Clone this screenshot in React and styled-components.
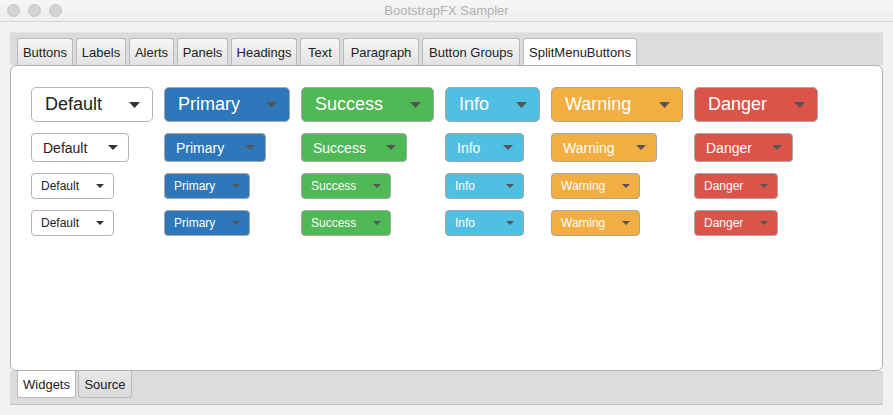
import React from "react";
import styled, { createGlobalStyle } from "styled-components";

const Global = createGlobalStyle`
  html, body {
    margin: 0;
    padding: 0;
    background: #f2f2f2;
    font-family: "Liberation Sans", Arial, sans-serif;
  }
`;

const Window = styled.div`
  width: 893px;
  height: 415px;
  background: #f2f2f2;
  display: flex;
  flex-direction: column;
  overflow: hidden;
`;

const TitleBar = styled.div`
  height: 21px;
  border-bottom: 1px solid #d6d6d6;
  background: linear-gradient(to bottom, #f6f6f6, #ededed);
  display: flex;
  align-items: center;
  position: relative;
  padding-left: 7px;
  gap: 8px;
`;

const Light = styled.span`
  width: 11px;
  height: 11px;
  border-radius: 50%;
  background: #d3d3d3;
  border: 1px solid #c6c6c6;
`;

const Title = styled.div`
  position: absolute;
  left: 0;
  right: 0;
  top: 0;
  line-height: 22px;
  text-align: center;
  font-size: 13px;
  color: #b2b2b2;
  pointer-events: none;
`;

const Body = styled.div`
  margin: 10px 10px 0 10px;
  display: flex;
  flex-direction: column;
`;

const Header = styled.div`
  height: 33px;
  background: #dcdcdc;
  border-top: 1px solid #e4e4e4;
  box-sizing: border-box;
  display: flex;
  align-items: flex-end;
  gap: 3px;
  padding-left: 7px;
`;

const Tab = styled.div`
  width: ${p => p.$w}px;
  height: 27px;
  box-sizing: border-box;
  display: flex;
  align-items: center;
  justify-content: center;
  font-size: 13px;
  color: #222;
  white-space: nowrap;
  border: 1px solid #b9b9b9;
  border-bottom: none;
  border-radius: 3px 3px 0 0;
  background: ${p => (p.$active ? "#ffffff" : "linear-gradient(to bottom, #f7f7f7, #e2e2e2)")};
`;

const Content = styled.div`
  height: 306px;
  box-sizing: border-box;
  background: #fff;
  border: 1px solid #b0b0b0;
  border-radius: 6px;
  padding: 21px 20px;
`;

const Grid = styled.div`
  display: grid;
  grid-template-columns: repeat(6, auto);
  justify-content: start;
  justify-items: start;
  column-gap: 11px;
  row-gap: 11px;
`;

const BottomBar = styled.div`
  height: 34px;
  box-sizing: border-box;
  background: #dcdcdc;
  border-bottom: 1px solid #c2c2c2;
  display: flex;
  align-items: flex-start;
  gap: 2px;
  padding-left: 7px;
`;

const BottomTab = styled.div`
  width: ${p => p.$w}px;
  height: 27px;
  box-sizing: border-box;
  display: flex;
  align-items: center;
  justify-content: center;
  font-size: 13px;
  color: #222;
  border: 1px solid #b9b9b9;
  border-top: none;
  border-radius: 0 0 3px 3px;
  background: ${p => (p.$active ? "#ffffff" : "linear-gradient(to bottom, #e8e8e8, #dadada)")};
`;

const colors = {
  default: { bg: "#ffffff", fg: "#222", border: "#b4b4b4", arrow: "#333" },
  primary: { bg: "#2e77bb", fg: "#fff", border: "#a6a6a6", arrow: "#555" },
  success: { bg: "#4fb955", fg: "#fff", border: "#a6a6a6", arrow: "#555" },
  info: { bg: "#51bfe1", fg: "#fff", border: "#a6a6a6", arrow: "#555" },
  warning: { bg: "#f2ae40", fg: "#fff", border: "#a6a6a6", arrow: "#555" },
  danger: { bg: "#dc5449", fg: "#fff", border: "#a6a6a6", arrow: "#555" },
};

const sizes = {
  lg: { h: 35, font: 18, padL: 13, arrowW: 36, aw: 11, ah: 6, r: 5 },
  md: { h: 29, font: 14, padL: 11, arrowW: 30, aw: 10, ah: 5, r: 4 },
  sm: { h: 26, font: 12, padL: 9, arrowW: 26, aw: 8, ah: 4, r: 4 },
  xs: { h: 26, font: 12, padL: 9, arrowW: 26, aw: 8, ah: 4, r: 4 },
};

const SplitButton = styled.div`
  display: flex;
  align-items: center;
  box-sizing: border-box;
  width: ${p => p.$w}px;
  height: ${p => sizes[p.$size].h}px;
  border: 1px solid ${p => colors[p.$kind].border};
  border-radius: ${p => sizes[p.$size].r}px;
  background: ${p => colors[p.$kind].bg};
  color: ${p => colors[p.$kind].fg};
  font-size: ${p => sizes[p.$size].font}px;
`;

const Label = styled.span`
  flex: 1;
  padding-left: ${p => sizes[p.$size].padL}px;
  white-space: nowrap;
`;

const ArrowBox = styled.span`
  width: ${p => sizes[p.$size].arrowW}px;
  height: 100%;
  display: flex;
  align-items: center;
  justify-content: center;
`;

function Arrow({ size, kind }) {
  const s = sizes[size];
  return (
    <svg width={s.aw} height={s.ah} viewBox={`0 0 ${s.aw} ${s.ah}`}>
      <polygon points={`0,0 ${s.aw},0 ${s.aw / 2},${s.ah}`} fill={colors[kind].arrow} />
    </svg>
  );
}

const rows = [
  { size: "lg", widths: [122, 126, 133, 95, 132, 124] },
  { size: "md", widths: [98, 102, 106, 79, 106, 99] },
  { size: "sm", widths: [83, 86, 90, 79, 89, 84] },
  { size: "xs", widths: [83, 86, 90, 79, 89, 84] },
];

const kinds = [
  ["default", "Default"],
  ["primary", "Primary"],
  ["success", "Success"],
  ["info", "Info"],
  ["warning", "Warning"],
  ["danger", "Danger"],
];

const topTabs = [
  ["Buttons", 56],
  ["Labels", 50],
  ["Alerts", 45],
  ["Panels", 51],
  ["Headings", 66],
  ["Text", 40],
  ["Paragraph", 76],
  ["Button Groups", 98],
  ["SplitMenuButtons", 114],
];

export default function App() {
  return (
    <Window>
      <Global />
      <TitleBar>
        <Light />
        <Light />
        <Light />
        <Title>BootstrapFX Sampler</Title>
      </TitleBar>
      <Body>
        <Header>
          {topTabs.map(([t, w], i) => (
            <Tab key={t} $w={w} $active={i === topTabs.length - 1}>
              {t}
            </Tab>
          ))}
        </Header>
        <Content>
          <Grid>
            {rows.map(row =>
              kinds.map(([kind, text], i) => (
                <SplitButton key={row.size + kind} $kind={kind} $size={row.size} $w={row.widths[i]}>
                  <Label $size={row.size}>{text}</Label>
                  <ArrowBox $size={row.size}>
                    <Arrow size={row.size} kind={kind} />
                  </ArrowBox>
                </SplitButton>
              ))
            )}
          </Grid>
        </Content>
        <BottomBar>
          <BottomTab $w={59} $active>Widgets</BottomTab>
          <BottomTab $w={54}>Source</BottomTab>
        </BottomBar>
      </Body>
    </Window>
  );
}
